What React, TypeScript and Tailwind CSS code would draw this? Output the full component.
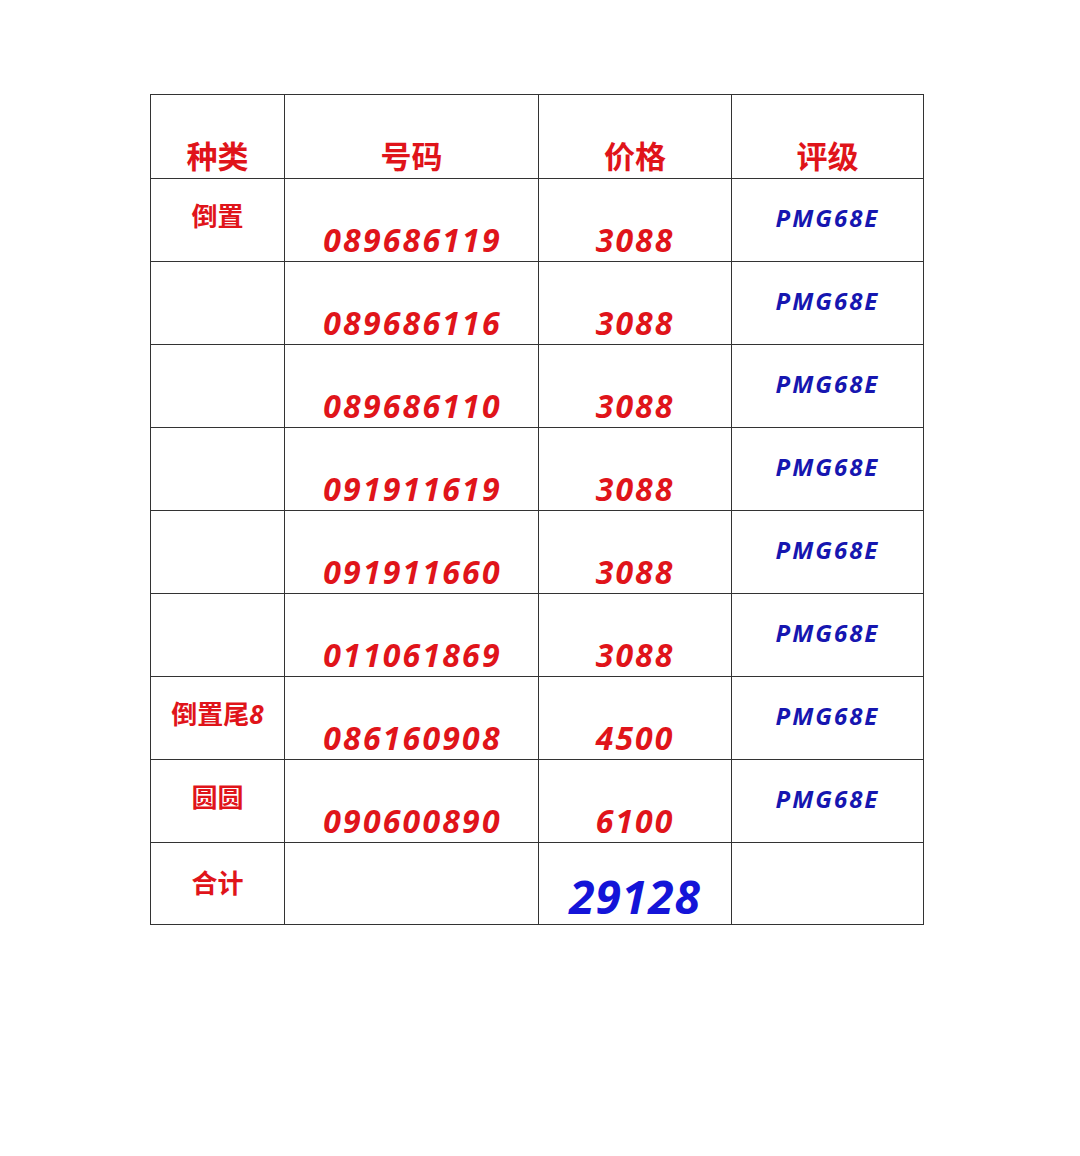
import React from "react";

const rows = [
  { cat: "倒置", num: "089686119", price: "3088" },
  { cat: "", num: "089686116", price: "3088" },
  { cat: "", num: "089686110", price: "3088" },
  { cat: "", num: "091911619", price: "3088" },
  { cat: "", num: "091911660", price: "3088" },
  { cat: "", num: "011061869", price: "3088" },
  { cat: "倒置尾8", num: "086160908", price: "4500" },
  { cat: "圆圆", num: "090600890", price: "6100" },
];

const font = { fontFamily: '"Open Sans", "Noto Sans CJK SC", sans-serif' };

function Cat({ text }: { text: string }) {
  const m = text.match(/^(.*?)(\d*)$/);
  const cjk = m ? m[1] : text;
  const digits = m ? m[2] : "";
  return (
    <>
      <span className="not-italic">{cjk}</span>
      {digits && <span className="italic">{digits}</span>}
    </>
  );
}

export default function App() {
  return (
    <div className="w-[1080px] h-[1156px] bg-white pt-[94px] pl-[150px]" style={font}>
      <table className="border-collapse table-fixed w-[773px]">
        <colgroup>
          <col className="w-[134px]" />
          <col className="w-[254px]" />
          <col className="w-[193px]" />
          <col className="w-[192px]" />
        </colgroup>
        <thead>
          <tr className="h-[84px]">
            {["种类", "号码", "价格", "评级"].map((h) => (
              <th
                key={h}
                className="border border-[#333333] p-0 align-bottom pb-[2px] text-[31px] leading-[40px] font-bold text-[#e0141a]"
              >
                {h}
              </th>
            ))}
          </tr>
        </thead>
        <tbody>
          {rows.map((r, i) => (
            <tr key={i} className="h-[83px]">
              <td className="border border-[#333333] p-0 align-middle text-center pb-[8px] text-[26px] font-bold text-[#e0141a]">
                <Cat text={r.cat} />
              </td>
              <td className="border border-[#333333] p-0 align-bottom text-center pb-[3px] pl-[2px] text-[32px] leading-[36px] font-bold italic tracking-[2.2px] text-[#e0141a]">
                {r.num}
              </td>
              <td className="border border-[#333333] p-0 align-bottom text-center pb-[3px] text-[32px] leading-[36px] font-bold italic tracking-[2px] text-[#e0141a]">
                {r.price}
              </td>
              <td className="border border-[#333333] p-0 align-middle text-center pb-[4px] text-[24px] font-bold italic tracking-[2px] text-[#1616b0]">
                PMG68E
              </td>
            </tr>
          ))}
          <tr className="h-[82px]">
            <td className="border border-[#333333] p-0 align-middle text-center text-[26px] font-bold text-[#e0141a]">
              合计
            </td>
            <td className="border border-[#333333] p-0"></td>
            <td className="border border-[#333333] p-0 align-bottom text-center pb-[2px] text-[46px] leading-[52px] font-bold italic tracking-[1px] text-[#1414d8]">
              29128
            </td>
            <td className="border border-[#333333] p-0"></td>
          </tr>
        </tbody>
      </table>
    </div>
  );
}
